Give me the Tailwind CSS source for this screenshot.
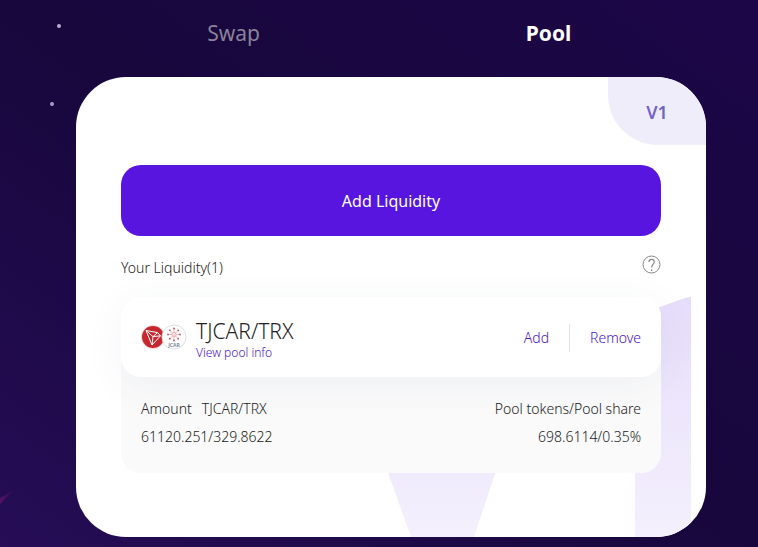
<!DOCTYPE html>
<html lang="en">
<head>
  <meta charset="UTF-8" />
  <meta name="viewport" content="width=device-width, initial-scale=1.0" />
  <title>Pool</title>
  <script src="https://cdn.jsdelivr.net/npm/@tailwindcss/browser@4"></script>
</head>
<body class="relative min-h-screen overflow-x-hidden bg-linear-to-tr from-[#260d56] via-[#17073c] to-[#1d0648] pl-[76px] pr-[52px] pb-[10px] font-['Noto_Sans','Noto_Sans_CJK_KR',sans-serif] text-sm font-light text-[#222222]">
  <!-- stars -->
  <span class="absolute left-[57px] top-6 size-1 rounded-full bg-[#b9acd2]"></span>
  <span class="absolute left-[50px] top-[102px] size-1 rounded-full bg-[#a99bc4]"></span>
  <svg class="absolute left-0 top-[488px]" width="16" height="18" viewBox="0 0 16 18" aria-hidden="true">
    <defs>
      <linearGradient id="comet" x1="0" y1="1" x2="1" y2="0">
        <stop offset="0" stop-color="#5a1268" />
        <stop offset="1" stop-color="#5a1268" stop-opacity="0" />
      </linearGradient>
    </defs>
    <path d="M0 10 L15 1 L0 16 Z" fill="url(#comet)" />
  </svg>

  <nav class="grid h-[77px] grid-cols-2 items-center pb-[11px] text-center text-[21px]">
    <a href="#swap" class="font-normal text-[#8b8299]">Swap</a>
    <a href="#pool" class="font-bold text-white">Pool</a>
  </nav>

  <main class="relative overflow-hidden rounded-[50px] bg-white px-[45px] pb-16">
    <!-- V1 watermark -->
    <svg class="absolute right-0 bottom-0" width="330" height="250" viewBox="0 0 330 250" aria-hidden="true">
      <defs>
        <linearGradient id="mark" gradientUnits="userSpaceOnUse" x1="0" y1="10" x2="0" y2="250">
          <stop offset="0" stop-color="#e6ddfa" />
          <stop offset="1" stop-color="#f4f0fd" />
        </linearGradient>
      </defs>
      <path d="M5 166 L35 250 H98 L126 166 Z" fill="url(#mark)" />
      <path d="M259 250 V29 L309 11 Q312 10 315 10 V250 Z" fill="url(#mark)" />
    </svg>

    <div class="-mr-[45px] flex justify-end">
      <button class="h-[68px] w-[98px] rounded-bl-[50px] bg-[#f0edfb] pt-[2px] text-lg font-semibold text-[#7463c9]">V1</button>
    </div>

    <button class="mt-5 h-[71px] w-full rounded-[20px] bg-[#5815e0] text-base font-normal text-white">Add Liquidity</button>

    <div class="mt-5 flex h-6 items-center justify-between">
      <h2>Your Liquidity(1)</h2>
      <button aria-label="Help" class="mb-2">
        <svg width="19" height="19" viewBox="0 0 19 19" fill="none" stroke="#888888" aria-hidden="true">
          <circle cx="9.5" cy="9.5" r="8.5" />
          <path d="M7 7 C7 3.6 12.2 3.6 12.2 7 C12.2 9.3 9.6 9.5 9.6 12.5" stroke-width="1.2" />
          <path d="M9 15.2 H10.3" stroke-width="1.4" />
        </svg>
      </button>
    </div>

    <section class="relative mt-[17px] rounded-[20px] bg-[#fafafa]">
      <div class="flex h-20 items-center justify-between rounded-[20px] bg-white px-5 shadow-[0_8px_40px_rgba(70,90,160,0.06)]">
        <div class="flex items-center gap-[9px]">
          <svg width="46" height="26" viewBox="0 0 46 26" aria-hidden="true">
            <circle cx="12" cy="13" r="12" fill="#f4dada" />
            <circle cx="12" cy="13" r="11" fill="#c5292f" />
            <path d="M5 6.5 L16.5 8.6 L19.5 11.8 L11 21 Z M5 6.5 L12 12.6 L19.5 11.8 M12 12.6 L11 21 M12 12.6 L16.5 8.6" fill="none" stroke="#ffffff" stroke-width="1" stroke-linejoin="round" />
            <circle cx="33" cy="13" r="12" fill="#ffffff" stroke="#dcdfe1" />
            <g stroke="#f0a3ab" stroke-width="0.8">
              <path d="M33 5 V16 M27.5 10.5 H38.5 M29 6.5 L37 14.5 M37 6.5 L29 14.5" />
              <circle cx="33" cy="10.5" r="2.2" fill="#fbdfe2" />
            </g>
            <g fill="#c2515e">
              <circle cx="33" cy="4.5" r="0.9" /><circle cx="33" cy="16.5" r="0.9" />
              <circle cx="27" cy="10.5" r="0.9" /><circle cx="39" cy="10.5" r="0.9" />
              <circle cx="28.8" cy="6.3" r="0.9" /><circle cx="37.2" cy="6.3" r="0.9" />
              <circle cx="28.8" cy="14.7" r="0.9" /><circle cx="37.2" cy="14.7" r="0.9" />
            </g>
            <text x="33" y="22.5" text-anchor="middle" font-size="5" font-weight="700" fill="#7d8b99">JCAR</text>
          </svg>
          <div class="pt-[7px]">
            <h3 class="text-[21px] leading-6">TJCAR/TRX</h3>
            <a href="#info" class="block text-xs leading-5 text-[#4a14c8]">View pool info</a>
          </div>
        </div>
        <div class="flex items-center pt-[2px] text-[#4a14c8]">
          <button class="pr-5">Add</button>
          <button class="border-l border-[#e2e2e8] py-1 pl-5">Remove</button>
        </div>
      </div>

      <dl class="flex justify-between px-5 pt-[18px] pb-[22px] leading-7">
        <div>
          <dt class="flex gap-[10px]"><span>Amount</span><span>TJCAR/TRX</span></dt>
          <dd>61120.251/329.8622</dd>
        </div>
        <div class="text-right">
          <dt>Pool tokens/Pool share</dt>
          <dd>698.6114/0.35%</dd>
        </div>
      </dl>
    </section>
  </main>
</body>
</html>
